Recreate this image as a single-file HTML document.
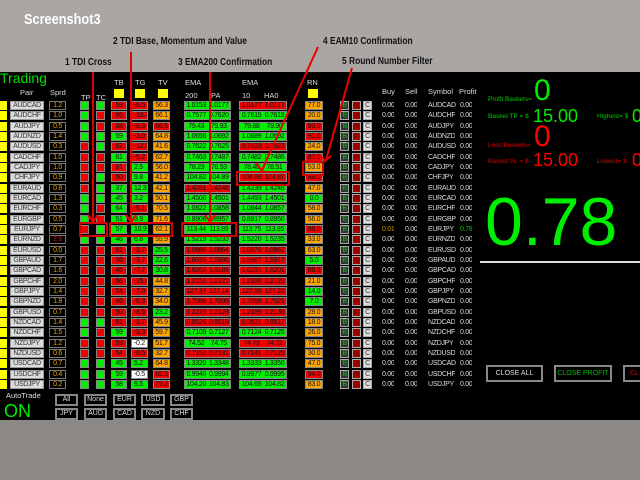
<!DOCTYPE html>
<html><head><meta charset="utf-8"><style>
*{margin:0;padding:0;box-sizing:border-box}
body{width:640px;height:480px;overflow:hidden;background:#aaa6a4;font-family:"Liberation Sans",sans-serif;position:relative}
.blk{position:absolute;left:0;top:72px;width:640px;height:348px;background:#000}
.bot{position:absolute;left:0;top:420px;width:640px;height:60px;background:#8c8886}
.a{position:absolute;white-space:nowrap}
.lbl{position:absolute;font-weight:bold;font-size:10.5px;color:#111;white-space:nowrap;transform:scaleX(0.8);transform-origin:0 0}
.r{position:absolute;left:0;width:640px;height:10px;font-size:7px;line-height:9px;letter-spacing:-0.3px}
.r>*{position:absolute;top:0;height:9px;text-align:center;font-style:normal;text-decoration:none;font-weight:normal;display:block;white-space:nowrap;overflow:hidden}
.y{left:0;width:7px;background:#ff0}
.p{left:10px;width:34px;background:#dcdcdc;color:#333;border:1px solid #999;line-height:7px}
.s{left:49px;width:17px;background:#000;color:#e8a000;border:1px solid #777;line-height:7px}
.tp{left:80px;width:9px;border:1px solid #888}.tc{left:96px;width:9px;border:1px solid #888}
.tb{left:111px;width:16px}.tg{left:131px;width:17px;text-align:left!important;padding-left:2px}.tv{left:153px;width:17px}
.e2{left:184px;width:47px}.e1{left:239px;width:48px}.rn{left:305px;width:18px}
.tb,.tg,.tv,.e2,.e1,.rn{border:1px solid #888;line-height:7px;color:#111}
.e2 u,.e1 u{display:inline-block;width:50%;text-decoration:none;text-align:center}
.g{background:#00f000}.rd{background:#f00000}.o{background:#ffa500}.w{background:#fff}
.bb,.sb,.cb{width:9px;border:1px solid #aaa;line-height:7px;font-size:7px}
.bb{left:340px;background:#333;color:#0c0}.sb{left:352px;background:#a00;color:#600}.cb{left:363px;background:#ddd;color:#333}
.bu{left:382px}.se{left:405px}.sy{left:428px}.pr{left:460px}
.bu,.se,.sy,.pr{color:#ddd;text-align:left!important}
.hd{position:absolute;color:#ddd;font-size:7.5px}
.btn{position:absolute;border:2px solid #888;color:#ddd;font-size:7px;text-align:center;background:#000;line-height:8px;white-space:nowrap;overflow:hidden}
.ln{position:absolute;background:#e00000;width:2px}
.bx{position:absolute;border:2px solid #d00000}
</style></head><body>
<div class="blk"></div><div class="bot"></div>
<div class="a" style="left:24px;top:11px;color:#fff;font-weight:bold;font-size:15px;transform:scaleX(0.85);transform-origin:0 0">Screenshot3</div>
<div class="lbl" style="left:113px;top:35px">2 TDI Base, Momentum and Value</div>
<div class="lbl" style="left:323px;top:35px">4 EAM10 Confirmation</div>
<div class="lbl" style="left:65px;top:56px">1 TDI Cross</div>
<div class="lbl" style="left:178px;top:56px">3 EMA200 Confirmation</div>
<div class="lbl" style="left:342px;top:55px">5 Round Number Filter</div>

<div class="a" style="left:0;top:70px;color:#00e000;font-size:14px">Trading</div>
<div class="hd" style="left:20px;top:88px">Pair</div><div class="hd" style="left:50px;top:88px">Sprd</div>
<div class="hd" style="left:81px;top:93px">TP</div><div class="hd" style="left:96px;top:93px">TC</div>
<div class="hd" style="left:114px;top:78px">TB</div><div class="hd" style="left:135px;top:78px">TG</div><div class="hd" style="left:158px;top:78px">TV</div>
<div class="a" style="left:114px;top:89px;width:10px;height:9px;background:#ff0"></div>
<div class="a" style="left:135px;top:89px;width:10px;height:9px;background:#ff0"></div>
<div class="a" style="left:158px;top:89px;width:10px;height:9px;background:#ff0"></div>
<div class="hd" style="left:185px;top:78px">EMA</div><div class="hd" style="left:185px;top:91px">200</div><div class="hd" style="left:211px;top:91px">PA</div>
<div class="hd" style="left:242px;top:78px">EMA</div><div class="hd" style="left:242px;top:91px">10</div><div class="hd" style="left:264px;top:91px">HA0</div>
<div class="hd" style="left:307px;top:78px">RN</div>
<div class="a" style="left:308px;top:89px;width:10px;height:9px;background:#ff0"></div>
<div class="hd" style="left:382px;top:87px">Buy</div><div class="hd" style="left:405px;top:87px">Sell</div><div class="hd" style="left:428px;top:87px">Symbol</div><div class="hd" style="left:459px;top:87px">Profit</div>

<div class="r" style="top:101px"><i class=y></i><b class=p>AUDCAD</b><b class=s>1.2</b><i class="tp g"></i><i class="tc g"></i><b class="tb rd">59</b><b class="tg rd">-6.5</b><b class="tv o">56.3</b><b class="e2 g"><u>1.0153</u><u>1.0177</u></b><b class="e1 rd"><u>1.0177</u><u>1.0177</u></b><b class="rn o">77.0</b><i class=bb>B</i><i class=sb>S</i><i class=cb>C</i><span class=bu>0.00</span><span class=se>0.00</span><span class=sy>AUDCAD</span><span class=pr>0.00</span></div>
<div class="r" style="top:111px"><i class=y></i><b class=p>AUDCHF</b><b class=s>1.0</b><i class="tp g"></i><i class="tc rd"></i><b class="tb rd">66</b><b class="tg rd">-10.7</b><b class="tv o">66.1</b><b class="e2 g"><u>0.7577</u><u>0.7620</u></b><b class="e1 g"><u>0.7615</u><u>0.7619</u></b><b class="rn o">20.0</b><i class=bb>B</i><i class=sb>S</i><i class=cb>C</i><span class=bu>0.00</span><span class=se>0.00</span><span class=sy>AUDCHF</span><span class=pr>0.00</span></div>
<div class="r" style="top:122px"><i class=y></i><b class=p>AUDJPY</b><b class=s>0.5</b><i class="tp g"></i><i class="tc rd"></i><b class="tb rd">68</b><b class="tg rd">-8.3</b><b class="tv rd">68.5</b><b class="e2 g"><u>79.43</u><u>79.93</u></b><b class="e1 g"><u>79.88</u><u>79.90</u></b><b class="rn rd">93.0</b><i class=bb>B</i><i class=sb>S</i><i class=cb>C</i><span class=bu>0.00</span><span class=se>0.00</span><span class=sy>AUDJPY</span><span class=pr>0.00</span></div>
<div class="r" style="top:132px"><i class=y></i><b class=p>AUDNZD</b><b class=s>1.4</b><i class="tp g"></i><i class="tc g"></i><b class="tb g">59</b><b class="tg rd">-3.0</b><b class="tv o">64.8</b><b class="e2 g"><u>1.0656</u><u>1.0692</u></b><b class="e1 g"><u>1.0689</u><u>1.0692</u></b><b class="rn rd">91.0</b><i class=bb>B</i><i class=sb>S</i><i class=cb>C</i><span class=bu>0.00</span><span class=se>0.00</span><span class=sy>AUDNZD</span><span class=pr>0.00</span></div>
<div class="r" style="top:142px"><i class=y></i><b class=p>AUDUSD</b><b class=s>0.3</b><i class="tp rd"></i><i class="tc g"></i><b class="tb rd">62</b><b class="tg rd">-12.8</b><b class="tv o">41.6</b><b class="e2 g"><u>0.7622</u><u>0.7625</u></b><b class="e1 rd"><u>0.7633</u><u>0.7623</u></b><b class="rn o">24.0</b><i class=bb>B</i><i class=sb>S</i><i class=cb>C</i><span class=bu>0.00</span><span class=se>0.00</span><span class=sy>AUDUSD</span><span class=pr>0.00</span></div>
<div class="r" style="top:153px"><i class=y></i><b class=p>CADCHF</b><b class=s>1.0</b><i class="tp rd"></i><i class="tc rd"></i><b class="tb g">61</b><b class="tg rd">-5.2</b><b class="tv o">62.7</b><b class="e2 g"><u>0.7463</u><u>0.7487</u></b><b class="e1 g"><u>0.7482</u><u>0.7486</u></b><b class="rn rd">87.0</b><i class=bb>B</i><i class=sb>S</i><i class=cb>C</i><span class=bu>0.00</span><span class=se>0.00</span><span class=sy>CADCHF</span><span class=pr>0.00</span></div>
<div class="r" style="top:163px"><i class=y></i><b class=p>CADJPY</b><b class=s>1.0</b><i class="tp rd"></i><i class="tc rd"></i><b class="tb rd">61</b><b class="tg g">2.5</b><b class="tv o">56.0</b><b class="e2 g"><u>78.23</u><u>78.53</u></b><b class="e1 g"><u>78.48</u><u>78.51</u></b><b class="rn o">53.0</b><i class=bb>B</i><i class=sb>S</i><i class=cb>C</i><span class=bu>0.00</span><span class=se>0.00</span><span class=sy>CADJPY</span><span class=pr>0.00</span></div>
<div class="r" style="top:173px"><i class=y></i><b class=p>CHFJPY</b><b class=s>0.9</b><i class="tp rd"></i><i class="tc g"></i><b class="tb rd">50</b><b class="tg g">9.8</b><b class="tv o">41.2</b><b class="e2 g"><u>104.82</u><u>104.89</u></b><b class="e1 rd"><u>104.89</u><u>104.87</u></b><b class="rn rd">88.0</b><i class=bb>B</i><i class=sb>S</i><i class=cb>C</i><span class=bu>0.00</span><span class=se>0.00</span><span class=sy>CHFJPY</span><span class=pr>0.00</span></div>
<div class="r" style="top:184px"><i class=y></i><b class=p>EURAUD</b><b class=s>0.8</b><i class="tp rd"></i><i class="tc g"></i><b class="tb g">37</b><b class="tg g">12.3</b><b class="tv o">42.1</b><b class="e2 rd"><u>1.4281</u><u>1.4248</u></b><b class="e1 g"><u>1.4239</u><u>1.4248</u></b><b class="rn o">47.0</b><i class=bb>B</i><i class=sb>S</i><i class=cb>C</i><span class=bu>0.00</span><span class=se>0.00</span><span class=sy>EURAUD</span><span class=pr>0.00</span></div>
<div class="r" style="top:194px"><i class=y></i><b class=p>EURCAD</b><b class=s>1.3</b><i class="tp g"></i><i class="tc g"></i><b class="tb g">45</b><b class="tg g">3.2</b><b class="tv o">50.1</b><b class="e2 g"><u>1.4500</u><u>1.4501</u></b><b class="e1 g"><u>1.4493</u><u>1.4501</u></b><b class="rn g">0.0</b><i class=bb>B</i><i class=sb>S</i><i class=cb>C</i><span class=bu>0.00</span><span class=se>0.00</span><span class=sy>EURCAD</span><span class=pr>0.00</span></div>
<div class="r" style="top:204px"><i class=y></i><b class=p>EURCHF</b><b class=s>0.3</b><i class="tp g"></i><i class="tc rd"></i><b class="tb g">64</b><b class="tg rd">-5.1</b><b class="tv o">70.5</b><b class="e2 g"><u>1.0822</u><u>1.0858</u></b><b class="e1 g"><u>1.0844</u><u>1.0857</u></b><b class="rn o">58.0</b><i class=bb>B</i><i class=sb>S</i><i class=cb>C</i><span class=bu>0.00</span><span class=se>0.00</span><span class=sy>EURCHF</span><span class=pr>0.00</span></div>
<div class="r" style="top:215px"><i class=y></i><b class=p>EURGBP</b><b class=s>0.5</b><i class="tp g"></i><i class="tc rd"></i><b class="tb g">51</b><b class="tg g">3.9</b><b class="tv o">71.6</b><b class="e2 g"><u>0.8906</u><u>0.8957</u></b><b class="e1 g"><u>0.8917</u><u>0.8950</u></b><b class="rn o">56.0</b><i class=bb>B</i><i class=sb>S</i><i class=cb>C</i><span class=bu>0.00</span><span class=se>0.00</span><span class=sy>EURGBP</span><span class=pr>0.00</span></div>
<div class="r" style="top:225px"><i class=y></i><b class=p>EURJPY</b><b class=s>0.7</b><i class="tp rd"></i><i class="tc g"></i><b class="tb g">57</b><b class="tg g">10.9</b><b class="tv o">62.1</b><b class="e2 g"><u>113.44</u><u>113.89</u></b><b class="e1 g"><u>113.75</u><u>113.85</u></b><b class="rn rd">88.0</b><i class=bb>B</i><i class=sb>S</i><i class=cb>C</i><span class=bu style="color:#c90">0.01</span><span class=se>0.00</span><span class=sy>EURJPY</span><span class=pr style="color:#0c0">0.78</span></div>
<div class="r" style="top:235px"><i class=y></i><b class=p>EURNZD</b><b class=s style="color:#e00">2.6</b><i class="tp g"></i><i class="tc g"></i><b class="tb g">46</b><b class="tg g">6.8</b><b class="tv o">55.9</b><b class="e2 g"><u>1.5219</u><u>1.5233</u></b><b class="e1 g"><u>1.5220</u><u>1.5235</u></b><b class="rn o">33.0</b><i class=bb>B</i><i class=sb>S</i><i class=cb>C</i><span class=bu>0.00</span><span class=se>0.00</span><span class=sy>EURNZD</span><span class=pr>0.00</span></div>
<div class="r" style="top:246px"><i class=y></i><b class=p>EURUSD</b><b class=s>0.0</b><i class="tp rd"></i><i class="tc rd"></i><b class="tb rd">51</b><b class="tg rd">-2.7</b><b class="tv g">25.5</b><b class="e2 rd"><u>1.0886</u><u>1.0864</u></b><b class="e1 rd"><u>1.0870</u><u>1.0862</u></b><b class="rn o">63.0</b><i class=bb>B</i><i class=sb>S</i><i class=cb>C</i><span class=bu>0.00</span><span class=se>0.00</span><span class=sy>EURUSD</span><span class=pr>0.00</span></div>
<div class="r" style="top:256px"><i class=y></i><b class=p>GBPAUD</b><b class=s>1.7</b><i class="tp rd"></i><i class="tc rd"></i><b class="tb rd">38</b><b class="tg rd">-3.7</b><b class="tv g">22.6</b><b class="e2 rd"><u>1.6035</u><u>1.5906</u></b><b class="e1 rd"><u>1.5967</u><u>1.5917</u></b><b class="rn g">5.0</b><i class=bb>B</i><i class=sb>S</i><i class=cb>C</i><span class=bu>0.00</span><span class=se>0.00</span><span class=sy>GBPAUD</span><span class=pr>0.00</span></div>
<div class="r" style="top:266px"><i class=y></i><b class=p>GBPCAD</b><b class=s>1.6</b><i class="tp rd"></i><i class="tc rd"></i><b class="tb rd">46</b><b class="tg rd">-7.7</b><b class="tv g">30.8</b><b class="e2 rd"><u>1.6262</u><u>1.6189</u></b><b class="e1 rd"><u>1.6251</u><u>1.6201</u></b><b class="rn rd">88.0</b><i class=bb>B</i><i class=sb>S</i><i class=cb>C</i><span class=bu>0.00</span><span class=se>0.00</span><span class=sy>GBPCAD</span><span class=pr>0.00</span></div>
<div class="r" style="top:277px"><i class=y></i><b class=p>GBPCHF</b><b class=s>2.0</b><i class="tp rd"></i><i class="tc rd"></i><b class="tb rd">56</b><b class="tg rd">-15.4</b><b class="tv o">44.8</b><b class="e2 rd"><u>1.2151</u><u>1.2121</u></b><b class="e1 rd"><u>1.2160</u><u>1.2129</u></b><b class="rn o">21.0</b><i class=bb>B</i><i class=sb>S</i><i class=cb>C</i><span class=bu>0.00</span><span class=se>0.00</span><span class=sy>GBPCHF</span><span class=pr>0.00</span></div>
<div class="r" style="top:287px"><i class=y></i><b class=p>GBPJPY</b><b class=s>1.4</b><i class="tp rd"></i><i class="tc rd"></i><b class="tb rd">54</b><b class="tg rd">-7.0</b><b class="tv o">32.7</b><b class="e2 rd"><u>127.37</u><u>127.14</u></b><b class="e1 rd"><u>127.56</u><u>127.20</u></b><b class="rn g">14.0</b><i class=bb>B</i><i class=sb>S</i><i class=cb>C</i><span class=bu>0.00</span><span class=se>0.00</span><span class=sy>GBPJPY</span><span class=pr>0.00</span></div>
<div class="r" style="top:297px"><i class=y></i><b class=p>GBPNZD</b><b class=s>1.8</b><i class="tp rd"></i><i class="tc rd"></i><b class="tb rd">46</b><b class="tg rd">-6.3</b><b class="tv o">34.0</b><b class="e2 rd"><u>1.7088</u><u>1.7008</u></b><b class="e1 rd"><u>1.7068</u><u>1.7021</u></b><b class="rn g">7.0</b><i class=bb>B</i><i class=sb>S</i><i class=cb>C</i><span class=bu>0.00</span><span class=se>0.00</span><span class=sy>GBPNZD</span><span class=pr>0.00</span></div>
<div class="r" style="top:308px"><i class=y></i><b class=p>GBPUSD</b><b class=s>0.7</b><i class="tp rd"></i><i class="tc rd"></i><b class="tb rd">50</b><b class="tg rd">-8.5</b><b class="tv g">23.2</b><b class="e2 rd"><u>1.2223</u><u>1.2128</u></b><b class="e1 rd"><u>1.2189</u><u>1.2136</u></b><b class="rn o">28.0</b><i class=bb>B</i><i class=sb>S</i><i class=cb>C</i><span class=bu>0.00</span><span class=se>0.00</span><span class=sy>GBPUSD</span><span class=pr>0.00</span></div>
<div class="r" style="top:318px"><i class=y></i><b class=p>NZDCAD</b><b class=s>1.4</b><i class="tp g"></i><i class="tc g"></i><b class="tb rd">51</b><b class="tg rd">-2.7</b><b class="tv o">45.9</b><b class="e2 rd"><u>0.9526</u><u>0.9518</u></b><b class="e1 rd"><u>0.9521</u><u>0.9517</u></b><b class="rn o">18.0</b><i class=bb>B</i><i class=sb>S</i><i class=cb>C</i><span class=bu>0.00</span><span class=se>0.00</span><span class=sy>NZDCAD</span><span class=pr>0.00</span></div>
<div class="r" style="top:328px"><i class=y></i><b class=p>NZDCHF</b><b class=s>1.5</b><i class="tp g"></i><i class="tc rd"></i><b class="tb g">59</b><b class="tg rd">-9.3</b><b class="tv o">59.7</b><b class="e2 g"><u>0.7109</u><u>0.7127</u></b><b class="e1 g"><u>0.7124</u><u>0.7125</u></b><b class="rn o">26.0</b><i class=bb>B</i><i class=sb>S</i><i class=cb>C</i><span class=bu>0.00</span><span class=se>0.00</span><span class=sy>NZDCHF</span><span class=pr>0.00</span></div>
<div class="r" style="top:339px"><i class=y></i><b class=p>NZDJPY</b><b class=s>1.2</b><i class="tp rd"></i><i class="tc rd"></i><b class="tb rd">59</b><b class="tg w">-0.2</b><b class="tv o">51.7</b><b class="e2 g"><u>74.52</u><u>74.75</u></b><b class="e1 rd"><u>74.73</u><u>74.72</u></b><b class="rn o">75.0</b><i class=bb>B</i><i class=sb>S</i><i class=cb>C</i><span class=bu>0.00</span><span class=se>0.00</span><span class=sy>NZDJPY</span><span class=pr>0.00</span></div>
<div class="r" style="top:349px"><i class=y></i><b class=p>NZDUSD</b><b class=s>0.6</b><i class="tp rd"></i><i class="tc rd"></i><b class="tb rd">54</b><b class="tg rd">-6.5</b><b class="tv o">32.7</b><b class="e2 rd"><u>0.7152</u><u>0.7131</u></b><b class="e1 rd"><u>0.7141</u><u>0.7129</u></b><b class="rn o">30.0</b><i class=bb>B</i><i class=sb>S</i><i class=cb>C</i><span class=bu>0.00</span><span class=se>0.00</span><span class=sy>NZDUSD</span><span class=pr>0.00</span></div>
<div class="r" style="top:359px"><i class=y></i><b class=p>USDCAD</b><b class=s>0.7</b><i class="tp g"></i><i class="tc g"></i><b class="tb g">45</b><b class="tg g">5.2</b><b class="tv o">64.8</b><b class="e2 g"><u>1.3320</u><u>1.3348</u></b><b class="e1 g"><u>1.3333</u><u>1.3350</u></b><b class="rn o">47.0</b><i class=bb>B</i><i class=sb>S</i><i class=cb>C</i><span class=bu>0.00</span><span class=se>0.00</span><span class=sy>USDCAD</span><span class=pr>0.00</span></div>
<div class="r" style="top:370px"><i class=y></i><b class=p>USDCHF</b><b class=s>0.4</b><i class="tp g"></i><i class="tc g"></i><b class="tb g">59</b><b class="tg w">-0.5</b><b class="tv rd">82.5</b><b class="e2 g"><u>0.9940</u><u>0.9994</u></b><b class="e1 g"><u>0.9977</u><u>0.9995</u></b><b class="rn rd">94.0</b><i class=bb>B</i><i class=sb>S</i><i class=cb>C</i><span class=bu>0.00</span><span class=se>0.00</span><span class=sy>USDCHF</span><span class=pr>0.00</span></div>
<div class="r" style="top:380px"><i class=y></i><b class=p>USDJPY</b><b class=s>0.2</b><i class="tp g"></i><i class="tc g"></i><b class="tb g">58</b><b class="tg g">9.5</b><b class="tv rd">79.2</b><b class="e2 g"><u>104.20</u><u>104.83</u></b><b class="e1 g"><u>104.65</u><u>104.82</u></b><b class="rn o">83.0</b><i class=bb>B</i><i class=sb>S</i><i class=cb>C</i><span class=bu>0.00</span><span class=se>0.00</span><span class=sy>USDJPY</span><span class=pr>0.00</span></div>

<!-- right panel -->
<div class="a" style="left:488px;top:96px;color:#0c0;font-size:6.5px">Profit Baskets=</div>
<div class="a" style="left:534px;top:76px;color:#00ee00;font-size:30px;line-height:30px">0</div>
<div class="a" style="left:488px;top:113px;color:#0c0;font-size:6.5px">Basket TP = $</div>
<div class="a" style="left:533px;top:106px;color:#00ee00;font-size:18px">15.00</div>
<div class="a" style="left:597px;top:113px;color:#0c0;font-size:6.5px">Highest= $</div>
<div class="a" style="left:632px;top:106px;color:#00ee00;font-size:18px">0</div>
<div class="a" style="left:488px;top:142px;color:#d00;font-size:6.5px">Loss Baskets=</div>
<div class="a" style="left:534px;top:122px;color:#f00;font-size:30px;line-height:30px">0</div>
<div class="a" style="left:488px;top:158px;color:#d00;font-size:6.5px">Basket SL = $-</div>
<div class="a" style="left:533px;top:150px;color:#f00;font-size:18px">15.00</div>
<div class="a" style="left:597px;top:158px;color:#d00;font-size:6.5px">Lowest= $-</div>
<div class="a" style="left:632px;top:150px;color:#f00;font-size:18px">0</div>
<div class="a" style="left:485px;top:188px;color:#00ee00;font-size:68px;line-height:68px">0.78</div>
<div class="a" style="left:480px;top:261px;width:160px;height:2px;background:#ddd"></div>
<div class="btn" style="left:486px;top:365px;width:57px;height:17px;line-height:13px">CLOSE ALL</div>
<div class="btn" style="left:554px;top:365px;width:58px;height:17px;line-height:13px;color:#0b0">CLOSE PROFIT</div>
<div class="btn" style="left:623px;top:365px;width:30px;height:17px;line-height:13px;color:#d00;text-align:left;padding-left:5px">CL</div>

<!-- bottom -->
<div class="a" style="left:6px;top:391px;color:#ddd;font-size:7.5px">AutoTrade</div>
<div class="a" style="left:4px;top:401px;color:#00ee00;font-size:18px">ON</div>
<div class="btn" style="left:55px;top:394px;width:23px;height:12px">All</div>
<div class="btn" style="left:84px;top:394px;width:23px;height:12px">None</div>
<div class="btn" style="left:113px;top:394px;width:23px;height:12px">EUR</div>
<div class="btn" style="left:141px;top:394px;width:24px;height:12px">USD</div>
<div class="btn" style="left:170px;top:394px;width:23px;height:12px">GBP</div>
<div class="btn" style="left:55px;top:408px;width:23px;height:12px">JPY</div>
<div class="btn" style="left:84px;top:408px;width:23px;height:12px">AUD</div>
<div class="btn" style="left:113px;top:408px;width:23px;height:12px">CAD</div>
<div class="btn" style="left:141px;top:408px;width:24px;height:12px">NZD</div>
<div class="btn" style="left:170px;top:408px;width:23px;height:12px">CHF</div>

<!-- annotations -->
<div class="ln" style="left:92px;top:72px;height:150px"></div>
<div class="ln" style="left:130px;top:52px;height:170px"></div>
<div class="ln" style="left:209px;top:72px;height:150px"></div>
<div class="bx" style="left:79px;top:222px;width:29px;height:15px"></div>
<div class="bx" style="left:109px;top:222px;width:64px;height:15px"></div>
<div class="bx" style="left:181px;top:222px;width:56px;height:15px"></div>
<div class="bx" style="left:236px;top:171px;width:54px;height:15px"></div>
<div class="bx" style="left:302px;top:161px;width:22px;height:15px"></div>
<svg class="a" style="left:0;top:0" width="640" height="480"><g stroke="#e00" stroke-width="2" fill="none">
<line x1="318" y1="47" x2="262" y2="170"/><polyline points="256,163 262,171 266,162"/>
<line x1="352" y1="68" x2="326" y2="160"/><polyline points="320,155 325,161 331,156"/>
<polyline points="88,215 93,222 98,215"/><polyline points="126,215 131,222 136,215"/><polyline points="205,215 210,222 215,215"/>
</g></svg>
</body></html>
